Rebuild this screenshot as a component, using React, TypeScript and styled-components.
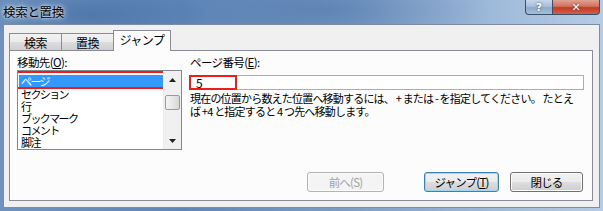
import styled, { createGlobalStyle } from "styled-components";

const GlobalStyle = createGlobalStyle`
  html, body {
    margin: 0;
    padding: 0;
    background: #ffffff;
  }
  body {
    font-family: "Noto Sans CJK JP", "Noto Sans", sans-serif;
  }
`;

const uiFont = `"Noto Sans CJK JP", "Liberation Sans", sans-serif`;

const Window = styled.div`
  width: 603px;
  height: 211px;
  display: flex;
  flex-direction: column;
  background:
    radial-gradient(ellipse 120px 30px at 90px 14px, rgba(40, 80, 140, 0.35), transparent),
    radial-gradient(ellipse 160px 40px at 330px 10px, rgba(40, 80, 140, 0.3), transparent),
    linear-gradient(90deg, #6f93c0 0%, #5f86b8 30%, #7ea0c9 60%, #a3bddc 85%, #b6cbe4 100%);
  overflow: hidden;
`;

const TitleBar = styled.div`
  height: 24px;
  display: flex;
  justify-content: space-between;
  align-items: flex-start;
  padding-left: 3px;
`;

const Title = styled.div`
  font-family: ${uiFont};
  font-size: 12.5px;
  line-height: 23px;
  color: #000;
  text-shadow: 0 0 6px rgba(255, 255, 255, 0.9), 0 0 3px rgba(255, 255, 255, 0.8);
  letter-spacing: -0.3px;
`;

const CaptionButtons = styled.div`
  display: flex;
  margin-right: 3px;
`;

const CaptionButton = styled.div<{ $close?: boolean }>`
  width: ${(p) => (p.$close ? 47 : 28)}px;
  height: 15px;
  box-sizing: border-box;
  border: 1px solid #3a4f6c;
  border-top: none;
  border-left: ${(p) => (p.$close ? "none" : "1px solid #3a4f6c")};
  border-radius: ${(p) => (p.$close ? "0 0 4px 0" : "0 0 0 4px")};
  background: ${(p) =>
    p.$close
      ? "linear-gradient(#e0a394 0%, #d2725e 45%, #c23b22 55%, #d1614a 100%)"
      : "linear-gradient(#c7d6ea 0%, #a9bfdc 45%, #8fa9cb 55%, #a7bfdc 100%)"};
  display: flex;
  align-items: center;
  justify-content: center;
  color: #fff;
  font-family: "DejaVu Sans", sans-serif;
  font-weight: bold;
  font-size: 11px;
  text-shadow: 0 0 2px #333;
`;

const Body = styled.div`
  flex: 1;
  margin: 0 3px 3px 3px;
  background: #f0f0f0;
  border: 1px solid #7d8ca3;
  padding: 6px 6px 6px 5px;
  display: flex;
  flex-direction: column;
`;

const TabRow = styled.div`
  display: flex;
  align-items: flex-end;
  height: 20px;
  padding-left: 1px;
  position: relative;
  z-index: 1;
  margin-bottom: -1px;
`;

const Tab = styled.div<{ $active?: boolean; $w: number }>`
  width: ${(p) => p.$w}px;
  height: ${(p) => (p.$active ? 21 : 18)}px;
  box-sizing: border-box;
  border: 1px solid #898c95;
  border-bottom: ${(p) => (p.$active ? "none" : "1px solid #898c95")};
  margin-left: -1px;
  background: ${(p) =>
    p.$active ? "#fcfcfc" : "linear-gradient(#f2f2f2 0%, #ebebeb 50%, #dddddd 51%, #cfcfcf 100%)"};
  font-family: ${uiFont};
  font-size: 12px;
  line-height: 17px;
  text-align: center;
  color: #000;
  letter-spacing: -0.5px;
`;

const Panel = styled.div`
  flex: 1;
  background: #fcfcfc;
  border: 1px solid #898c95;
  padding: 4px 8px 8px 7px;
  display: flex;
  gap: 8px;
`;

const LeftColumn = styled.div`
  width: 165px;
  display: flex;
  flex-direction: column;
`;

const RightColumn = styled.div`
  flex: 1;
  display: flex;
  flex-direction: column;
`;

const Label = styled.div`
  font-family: ${uiFont};
  font-size: 11.5px;
  line-height: 15px;
  color: #000;
  letter-spacing: -0.6px;
  u {
    text-decoration: underline;
  }
`;

const ListBox = styled.div`
  height: 80px;
  box-sizing: border-box;
  border: 1px solid #828790;
  background: #fff;
  display: flex;
`;

const ListItems = styled.div`
  flex: 1;
  padding: 4px 0 0 1px;
  overflow: hidden;
`;

const ListItem = styled.div<{ $selected?: boolean }>`
  position: relative;
  height: ${(p) => (p.$selected ? 13 : 12)}px;
  padding-left: 2px;
  font-family: ${uiFont};
  font-size: 11px;
  line-height: ${(p) => (p.$selected ? 13 : 12)}px;
  letter-spacing: -1.6px;
  color: ${(p) => (p.$selected ? "#fff" : "#000")};
  background: ${(p) => (p.$selected ? "#3399ff" : "transparent")};
  white-space: nowrap;
  ${(p) =>
    p.$selected &&
    `
    &::after {
      content: "";
      position: absolute;
      left: -6px;
      right: -2px;
      top: -4px;
      bottom: -1px;
      border: 2px solid #ee1c1c;
    }
  `}
`;

const ScrollBar = styled.div`
  width: 17px;
  display: flex;
  flex-direction: column;
  background: #f0f0f0;
  border-left: 1px solid #ececec;
`;

const ScrollArrow = styled.div`
  height: 17px;
  display: flex;
  align-items: center;
  justify-content: center;
`;

const ScrollTrack = styled.div`
  flex: 1;
  display: flex;
  flex-direction: column;
  padding-top: 7px;
  align-items: center;
`;

const Thumb = styled.div`
  width: 15px;
  height: 15px;
  box-sizing: border-box;
  border: 1px solid #9a9a9a;
  border-radius: 2px;
  background: linear-gradient(90deg, #f3f3f3 0%, #e8e8e8 50%, #d6d6d6 100%);
`;

const InputWrap = styled.div`
  position: relative;
  margin-top: 5px;
  &::after {
    content: "";
    position: absolute;
    left: -1px;
    top: 0;
    width: 48px;
    height: 15px;
    border: 1px solid #ee1c1c;
    box-shadow: inset 0 0 0 1px #ee1c1c;
    box-sizing: border-box;
  }
`;

const TextInput = styled.div`
  height: 15px;
  box-sizing: border-box;
  border: 1px solid #abadb3;
  background: #fff;
  padding-left: 5px;
  font-family: ${uiFont};
  font-size: 12px;
  line-height: 13px;
  color: #000;
`;

const Description = styled.div`
  margin-top: 2px;
  font-family: ${uiFont};
  font-size: 11px;
  line-height: 13px;
  letter-spacing: -0.8px;
  color: #000;
  white-space: nowrap;
`;

const ButtonRow = styled.div`
  margin-top: auto;
  display: flex;
  justify-content: flex-end;
  padding-right: 1px;
`;

const Button = styled.div<{ $w: number; $gap?: number; $disabled?: boolean; $focus?: boolean }>`
  width: ${(p) => p.$w}px;
  height: 20px;
  margin-left: ${(p) => p.$gap ?? 0}px;
  box-sizing: border-box;
  border: 1px solid ${(p) => (p.$disabled ? "#b0b4b8" : p.$focus ? "#3c7fb1" : "#707070")};
  border-radius: 3px;
  background: ${(p) =>
    p.$disabled
      ? "#f4f4f4"
      : "linear-gradient(#f2f2f2 0%, #ebebeb 50%, #dddddd 51%, #cfcfcf 100%)"};
  box-shadow: ${(p) => (p.$focus ? "inset 0 0 0 1px #9ad6f5" : "inset 0 0 0 1px #fbfbfb")};
  font-family: ${uiFont};
  font-size: 11.5px;
  line-height: 18px;
  letter-spacing: -0.8px;
  text-align: center;
  color: ${(p) => (p.$disabled ? "#a0a0a0" : "#000")};
`;

const items = ["ページ", "セクション", "行", "ブックマーク", "コメント", "脚注"];

function UpArrow() {
  return (
    <svg width="7" height="4" viewBox="0 0 7 4">
      <path d="M3.5 0 L7 4 L0 4 Z" fill="#222" />
    </svg>
  );
}

function DownArrow() {
  return (
    <svg width="7" height="4" viewBox="0 0 7 4">
      <path d="M0 0 L7 0 L3.5 4 Z" fill="#222" />
    </svg>
  );
}

export default function App() {
  return (
    <>
      <GlobalStyle />
      <Window>
        <TitleBar>
          <Title>検索と置換</Title>
          <CaptionButtons>
            <CaptionButton>?</CaptionButton>
            <CaptionButton $close>✕</CaptionButton>
          </CaptionButtons>
        </TitleBar>
        <Body>
          <TabRow>
            <Tab $w={53}>検索</Tab>
            <Tab $w={53}>置換</Tab>
            <Tab $w={58} $active>
              ジャンプ
            </Tab>
          </TabRow>
          <Panel>
            <LeftColumn>
              <Label>
                移動先(<u>O</u>):
              </Label>
              <ListBox>
                <ListItems>
                  {items.map((item, i) => (
                    <ListItem key={item} $selected={i === 0}>
                      {item}
                    </ListItem>
                  ))}
                </ListItems>
                <ScrollBar>
                  <ScrollArrow>
                    <UpArrow />
                  </ScrollArrow>
                  <ScrollTrack>
                    <Thumb />
                  </ScrollTrack>
                  <ScrollArrow>
                    <DownArrow />
                  </ScrollArrow>
                </ScrollBar>
              </ListBox>
            </LeftColumn>
            <RightColumn>
              <Label>
                ページ番号(<u>E</u>):
              </Label>
              <InputWrap>
                <TextInput>5</TextInput>
              </InputWrap>
              <Description>
                現在の位置から数えた位置へ移動するには、 + または - を指定してください。 たとえ
                <br />
                ば +4 と指定すると 4 つ先へ移動します。
              </Description>
              <ButtonRow>
                <Button $w={77} $disabled>
                  前へ(S)
                </Button>
                <Button $w={75} $gap={40} $focus>
                  ジャンプ(<u>T</u>)
                </Button>
                <Button $w={73} $gap={11}>
                  閉じる
                </Button>
              </ButtonRow>
            </RightColumn>
          </Panel>
        </Body>
      </Window>
    </>
  );
}
